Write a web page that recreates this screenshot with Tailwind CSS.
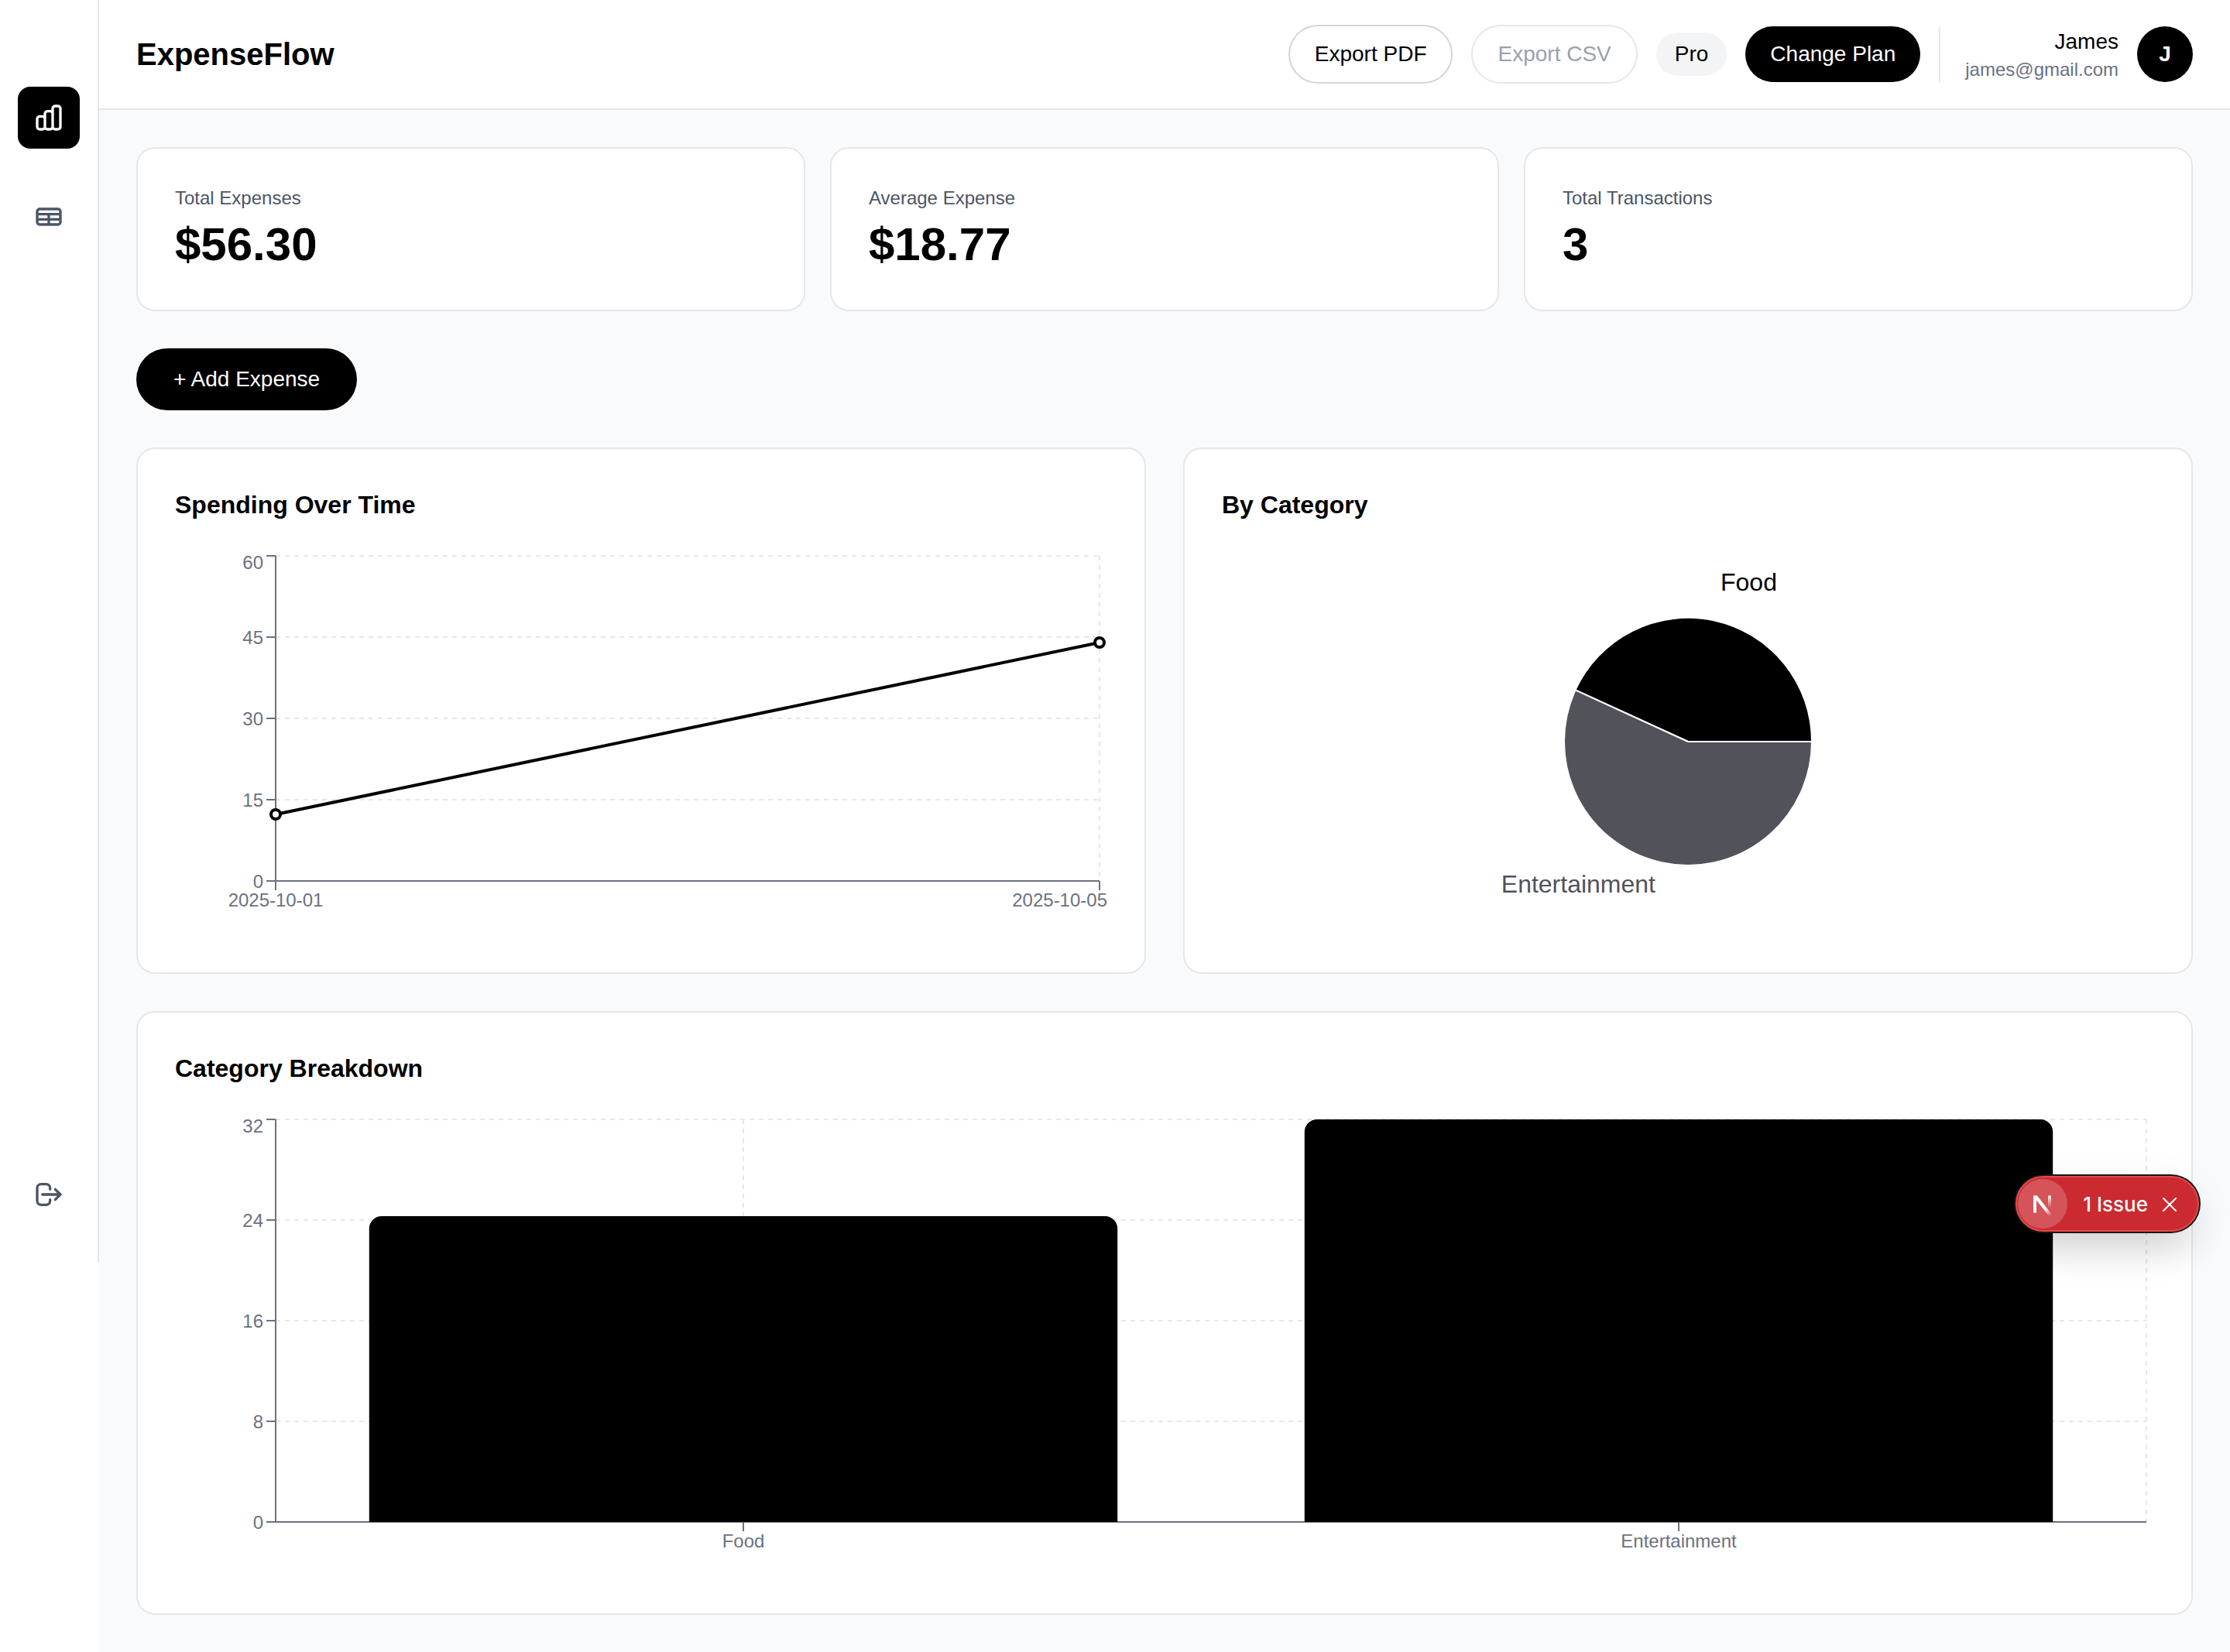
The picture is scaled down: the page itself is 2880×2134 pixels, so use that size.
<!DOCTYPE html>
<html lang="en">
<head>
<meta charset="utf-8">
<title>ExpenseFlow</title>
<script src="https://cdn.jsdelivr.net/npm/@tailwindcss/browser@4"></script>
</head>
<body class="bg-white font-['Liberation_Sans',Arial,sans-serif] text-black antialiased">
<div class="flex min-h-screen items-stretch">

  <!-- Sidebar -->
  <div class="w-32 shrink-0 bg-white">
    <nav aria-label="Main" class="flex h-[1631px] flex-col items-center border-r-2 border-gray-200 pt-28 pb-12">
      <div class="flex flex-1 flex-col gap-12">
        <a href="#dashboard" aria-label="Dashboard" class="flex size-20 items-center justify-center rounded-2xl bg-black text-white">
          <svg class="size-10" viewBox="0 0 24 24" fill="none" stroke="currentColor" stroke-width="2" stroke-linecap="round" stroke-linejoin="round"><path d="M9 19v-6a2 2 0 00-2-2H5a2 2 0 00-2 2v6a2 2 0 002 2h2a2 2 0 002-2zm0 0V9a2 2 0 012-2h2a2 2 0 012 2v10m-6 0a2 2 0 002 2h2a2 2 0 002-2m0 0V5a2 2 0 012-2h2a2 2 0 012 2v14a2 2 0 01-2 2h-2a2 2 0 01-2-2z"/></svg>
        </a>
        <a href="#table" aria-label="Table" class="flex size-20 items-center justify-center rounded-2xl text-gray-600">
          <svg class="size-10" viewBox="0 0 24 24" fill="none" stroke="currentColor" stroke-width="2" stroke-linecap="round" stroke-linejoin="round"><path d="M3 10h18M3 14h18m-9-4v8m-7 0h14a2 2 0 002-2V8a2 2 0 00-2-2H5a2 2 0 00-2 2v8a2 2 0 002 2z"/></svg>
        </a>
      </div>
      <button type="button" aria-label="Sign out" class="flex size-20 items-center justify-center rounded-2xl text-gray-600">
        <svg class="size-10" viewBox="0 0 24 24" fill="none" stroke="currentColor" stroke-width="2" stroke-linecap="round" stroke-linejoin="round"><path d="M17 16l4-4m0 0l-4-4m4 4H7m6 4v1a3 3 0 01-3 3H6a3 3 0 01-3-3V7a3 3 0 013-3h4a3 3 0 013 3v1"/></svg>
      </button>
    </nav>
  </div>

  <div class="flex min-w-0 flex-1 flex-col bg-gray-50">
    <!-- Header -->
    <header class="flex items-center justify-between border-b-2 border-gray-200 bg-white px-12 py-8">
      <h1 class="text-[40px] leading-14 font-bold">ExpenseFlow</h1>
      <div class="flex items-center gap-6 text-[28px] leading-10">
        <button type="button" class="rounded-full border-2 border-gray-300 px-8 py-4">Export PDF</button>
        <button type="button" disabled class="rounded-full border-2 border-gray-200 px-8 py-4 text-gray-400">Export CSV</button>
        <span class="rounded-full bg-gray-100 px-6 py-2">Pro</span>
        <button type="button" class="rounded-full bg-black px-8 py-4 text-white">Change Plan</button>
        <div class="flex items-center gap-6 border-l-2 border-gray-200 pl-8">
          <div class="text-right">
            <p>James</p>
            <p class="text-2xl text-gray-500">james@gmail.com</p>
          </div>
          <div class="flex size-18 items-center justify-center rounded-full bg-black font-bold text-white">J</div>
        </div>
      </div>
    </header>

    <main class="flex flex-col gap-12 p-12">
      <!-- Summary -->
      <section class="grid grid-cols-3 gap-8">
        <div class="rounded-3xl border-2 border-gray-200 bg-white p-12">
          <p class="mb-2 text-2xl text-gray-600">Total Expenses</p>
          <p class="text-6xl leading-18 font-bold">$56.30</p>
        </div>
        <div class="rounded-3xl border-2 border-gray-200 bg-white p-12">
          <p class="mb-2 text-2xl text-gray-600">Average Expense</p>
          <p class="text-6xl leading-18 font-bold">$18.77</p>
        </div>
        <div class="rounded-3xl border-2 border-gray-200 bg-white p-12">
          <p class="mb-2 text-2xl text-gray-600">Total Transactions</p>
          <p class="text-6xl leading-18 font-bold">3</p>
        </div>
      </section>

      <button type="button" class="self-start rounded-full bg-black px-12 py-5 text-[28px] leading-10 text-white">+ Add Expense</button>

      <section class="grid grid-cols-2 gap-12">
        <!-- Line chart -->
        <div class="rounded-3xl border-2 border-gray-200 bg-white p-12">
          <h2 class="mb-8 text-[32px] leading-12 font-bold">Spending Over Time</h2>
          <div class="h-[500px] pt-[10px] pr-[10px] pl-[130px]">
            <svg class="h-[420px] w-full overflow-visible text-2xl" role="img" aria-label="Spending over time">
              <g stroke="#e5e7eb" stroke-width="2" stroke-dasharray="6 6">
                <line x1="0" x2="100%" y1="0" y2="0"/>
                <line x1="0" x2="100%" y1="105" y2="105"/>
                <line x1="0" x2="100%" y1="210" y2="210"/>
                <line x1="0" x2="100%" y1="315" y2="315"/>
                <line x1="100%" x2="100%" y1="0" y2="420"/>
              </g>
              <g stroke="#6b7280" stroke-width="2">
                <line x1="0" x2="100%" y1="420" y2="420"/>
                <line x1="0" x2="0" y1="0" y2="432"/>
                <line x1="100%" x2="100%" y1="420" y2="432"/>
                <line x1="-12" x2="0" y1="0" y2="0"/>
                <line x1="-12" x2="0" y1="105" y2="105"/>
                <line x1="-12" x2="0" y1="210" y2="210"/>
                <line x1="-12" x2="0" y1="315" y2="315"/>
                <line x1="-12" x2="0" y1="420" y2="420"/>
              </g>
              <g fill="#6b7280">
                <g text-anchor="end">
                  <text x="-16" y="17">60</text>
                  <text x="-16" y="114">45</text>
                  <text x="-16" y="219">30</text>
                  <text x="-16" y="324">15</text>
                  <text x="-16" y="429">0</text>
                </g>
                <text x="0" y="453" text-anchor="middle">2025-10-01</text>
                <text x="100%" y="453" dx="10" text-anchor="end">2025-10-05</text>
              </g>
              <line x1="0" y1="334" x2="100%" y2="112" stroke="#000" stroke-width="4"/>
              <g fill="#fff" stroke="#000" stroke-width="4">
                <circle cx="0" cy="334" r="6"/>
                <circle cx="100%" cy="112" r="6"/>
              </g>
            </svg>
          </div>
        </div>

        <!-- Pie chart -->
        <div class="rounded-3xl border-2 border-gray-200 bg-white p-12">
          <h2 class="mb-8 text-[32px] leading-12 font-bold">By Category</h2>
          <svg class="h-[500px] w-full text-[32px]" role="img" aria-label="Spending by category">
            <svg x="50%" y="50%" overflow="visible">
              <g stroke="#fff" stroke-width="2">
                <path fill="#000" d="M0 0L160 0A160 160 0 0 0 -145.5 -66.7Z"/>
                <path fill="#52525b" d="M0 0L-145.5 -66.7A160 160 0 1 0 160 0Z"/>
              </g>
              <text x="42" y="-195" fill="#000">Food</text>
              <text x="-42" y="195" fill="#52525b" text-anchor="end">Entertainment</text>
            </svg>
          </svg>
        </div>
      </section>

      <!-- Bar chart -->
      <section class="rounded-3xl border-2 border-gray-200 bg-white p-12">
        <h2 class="mb-8 text-[32px] leading-12 font-bold">Category Breakdown</h2>
        <div class="h-[600px] pt-[10px] pr-[10px] pl-[130px]">
          <svg class="h-[520px] w-full overflow-visible text-2xl" role="img" aria-label="Category breakdown">
            <g stroke="#e5e7eb" stroke-width="2" stroke-dasharray="6 6">
              <line x1="0" x2="100%" y1="0" y2="0"/>
              <line x1="0" x2="100%" y1="130" y2="130"/>
              <line x1="0" x2="100%" y1="260" y2="260"/>
              <line x1="0" x2="100%" y1="390" y2="390"/>
              <line x1="25%" x2="25%" y1="0" y2="520"/>
              <line x1="75%" x2="75%" y1="0" y2="520"/>
              <line x1="100%" x2="100%" y1="0" y2="520"/>
            </g>
            <g stroke="#6b7280" stroke-width="2">
              <line x1="0" x2="100%" y1="520" y2="520"/>
              <line x1="0" x2="0" y1="0" y2="520"/>
              <line x1="25%" x2="25%" y1="520" y2="532"/>
              <line x1="75%" x2="75%" y1="520" y2="532"/>
              <line x1="-12" x2="0" y1="0" y2="0"/>
              <line x1="-12" x2="0" y1="130" y2="130"/>
              <line x1="-12" x2="0" y1="260" y2="260"/>
              <line x1="-12" x2="0" y1="390" y2="390"/>
              <line x1="-12" x2="0" y1="520" y2="520"/>
            </g>
            <g fill="#6b7280">
              <g text-anchor="end">
                <text x="-16" y="17">32</text>
                <text x="-16" y="139">24</text>
                <text x="-16" y="269">16</text>
                <text x="-16" y="399">8</text>
                <text x="-16" y="529">0</text>
              </g>
              <g text-anchor="middle">
                <text x="25%" y="553">Food</text>
                <text x="75%" y="553">Entertainment</text>
              </g>
            </g>
            <svg width="100%" height="520">
              <rect x="5%" y="125" width="40%" height="420" rx="16"/>
              <rect x="55%" y="0" width="40%" height="545" rx="16"/>
            </svg>
          </svg>
        </div>
      </section>
    </main>
  </div>
</div>

<!-- Dev-tools issue badge -->
<div class="absolute top-[1519px] right-10 flex h-18 items-center rounded-full border-2 border-[#e5484d] bg-[#ca2a30] pr-6 pl-px text-white shadow-[0_0_0_2px_#171717,0_12px_60px_rgba(0,0,0,0.06),0_32px_48px_-8px_rgba(0,0,0,0.14)]">
  <button type="button" aria-label="Open dev tools" class="flex size-16 items-center justify-center rounded-full bg-white/20">
    <svg class="size-10" viewBox="0 0 40 40">
      <defs>
        <linearGradient id="stem" x1="0" y1="9" x2="0" y2="25" gradientUnits="userSpaceOnUse"><stop stop-color="#fff"/><stop offset="1" stop-color="#fff" stop-opacity="0"/></linearGradient>
        <linearGradient id="diag" x1="23" y1="26" x2="30" y2="36" gradientUnits="userSpaceOnUse"><stop stop-color="#fff"/><stop offset="1" stop-color="#fff" stop-opacity="0"/></linearGradient>
      </defs>
      <path d="M8 9.5H12V31.5H8Z" fill="#fff"/>
      <path d="M8 9.5H13L32.5 34.5L29 37L10.5 13.5Z" fill="url(#diag)"/>
      <path d="M27 9.5H31V25H27Z" fill="url(#stem)"/>
    </svg>
  </button>
  <button type="button" class="ml-5 pt-0.5 font-['Inter',sans-serif] text-[26px] leading-8 font-medium">1 Issue</button>
  <button type="button" aria-label="Dismiss" class="ml-4 pt-0.5">
    <svg class="size-6" viewBox="0 0 24 24" fill="none" stroke="#fff" stroke-width="2" stroke-linecap="round"><path d="M4 4L20 20M20 4L4 20"/></svg>
  </button>
</div>
</body>
</html>
